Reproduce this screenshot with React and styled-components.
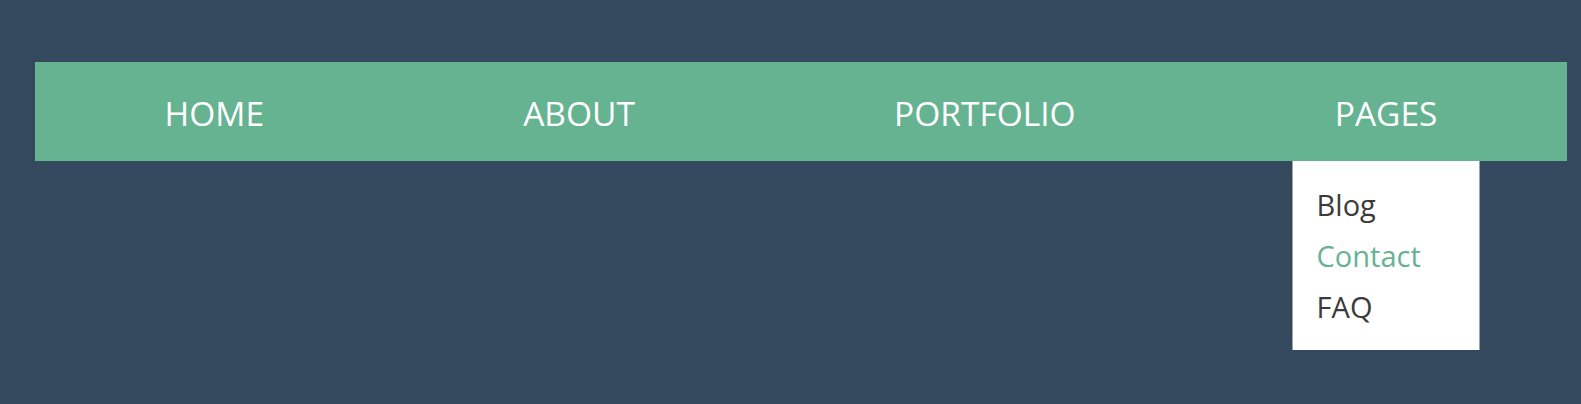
import React from 'react';
import styled, { createGlobalStyle } from 'styled-components';

const slate = '#34495e';
const green = '#66b391';
const ink = '#3b3b3b';

const GlobalStyle = createGlobalStyle`
  body {
    margin: 0;
    background: ${slate};
    font-family: 'Open Sans', 'Noto Sans', sans-serif;
  }
`;

const Page = styled.div`
  padding: 62px 14px 54px 35px;
  min-height: 404px;
  box-sizing: border-box;
`;

const Nav = styled.nav`
  display: flex;
  justify-content: space-around;
  align-items: center;
  height: 99px;
  background: ${green};
`;

const NavItem = styled.div`
  position: relative;
  height: 100%;
  display: flex;
  align-items: center;
`;

const NavLink = styled.a`
  color: #fff;
  font-size: 33.5px;
  text-transform: uppercase;
  text-decoration: none;
  padding-top: 2px;
`;

const Dropdown = styled.ul`
  position: absolute;
  top: 100%;
  left: 50%;
  transform: translateX(-50%);
  width: 187px;
  margin: 0;
  padding: 18px 24px;
  box-sizing: border-box;
  list-style: none;
  background: #fff;
`;

const DropLink = styled.li`
  font-size: 29px;
  line-height: 51px;
  color: ${(p) => (p.$active ? green : ink)};
`;

const pages = ['Blog', 'Contact', 'FAQ'];

const App = () => {
  return (
    <Page>
      <GlobalStyle />
      <Nav>
        <NavItem><NavLink>Home</NavLink></NavItem>
        <NavItem><NavLink>About</NavLink></NavItem>
        <NavItem><NavLink>Portfolio</NavLink></NavItem>
        <NavItem>
          <NavLink>Pages</NavLink>
          <Dropdown>
            {pages.map((p) => (
              <DropLink key={p} $active={p === 'Contact'}>{p}</DropLink>
            ))}
          </Dropdown>
        </NavItem>
      </Nav>
    </Page>
  );
};

export default App;
